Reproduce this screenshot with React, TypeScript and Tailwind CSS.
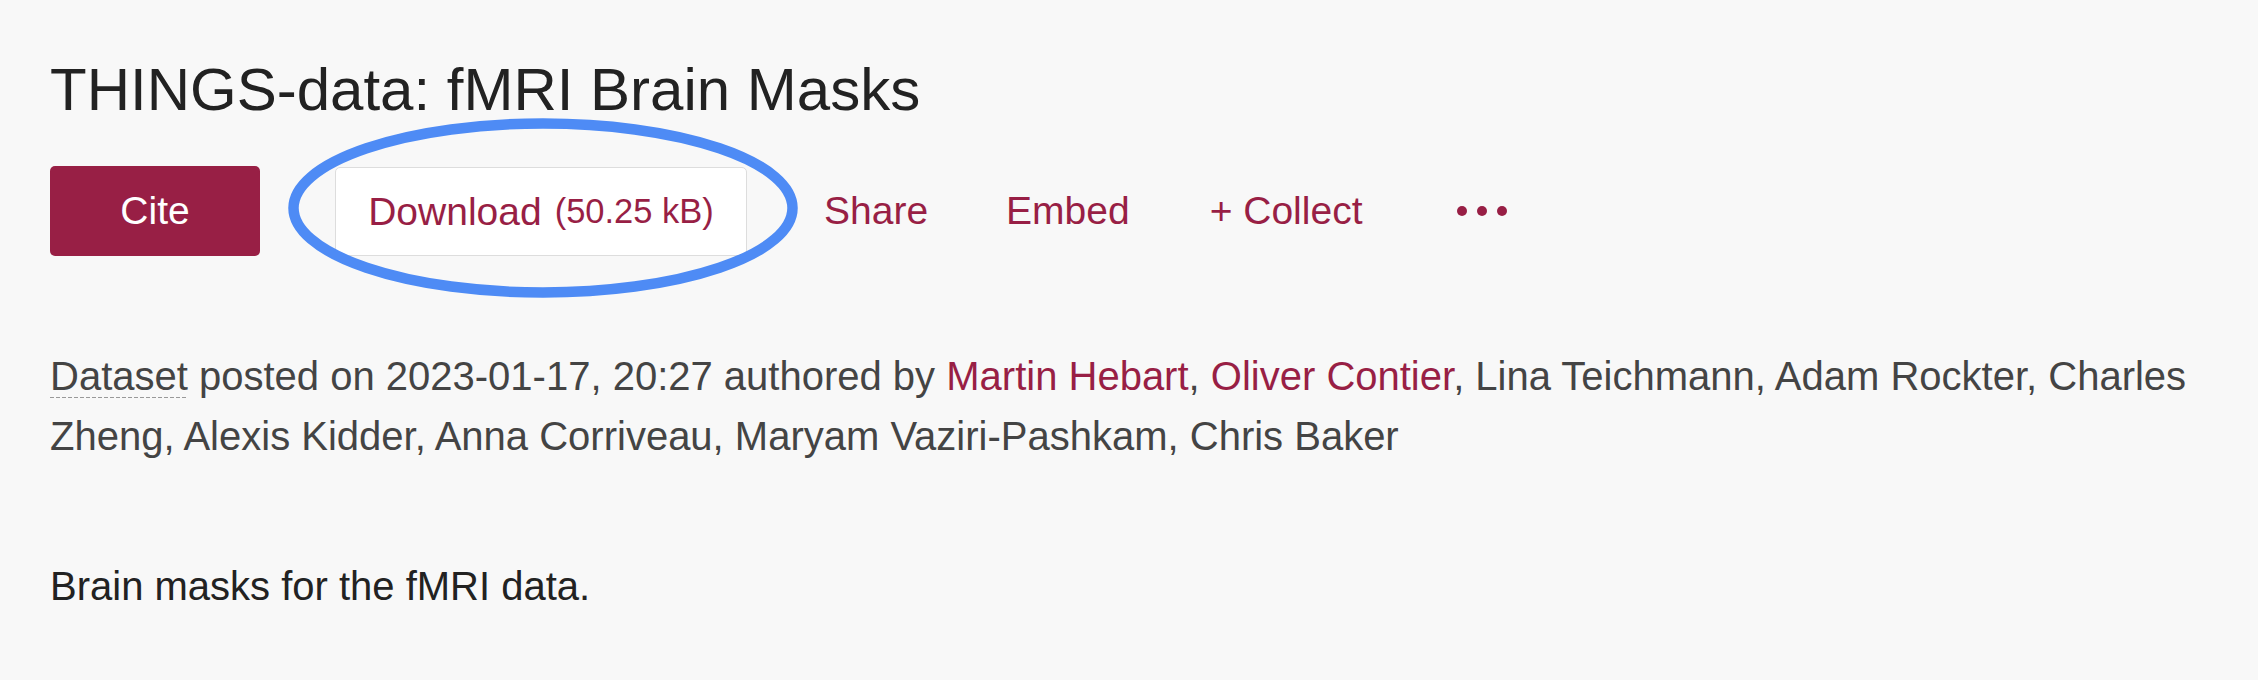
import React from "react";

export default function App() {
  return (
    <div className="min-h-[680px] w-full bg-[#f8f8f8] px-[50px] pt-[54px] font-['Liberation_Sans',Arial,sans-serif]">
      <h1 className="text-[60px] leading-[72px] font-normal text-[#222222]">
        THINGS-data: fMRI Brain Masks
      </h1>

      <div className="mt-[40px] flex h-[90px] items-center">
        <button className="h-[90px] w-[210px] rounded-[5px] bg-[#981f45] text-[39px] leading-[90px] text-white">
          Cite
        </button>

        <div className="relative ml-[75px] h-[89px] w-[412px]">
          <svg
            className="pointer-events-none absolute left-[-47px] top-[-49px] z-10"
            width="510"
            height="180"
            viewBox="0 0 510 180"
          >
            <ellipse
              cx="255"
              cy="90"
              rx="249.5"
              ry="84.5"
              fill="none"
              stroke="#4e8bf5"
              strokeWidth="10.5"
            />
          </svg>
          <button className="flex h-[89px] w-[412px] items-center justify-center rounded-[5px] border border-[#dddddd] bg-white text-[39px] leading-[87px] text-[#981f45]">
            <span>Download</span>
            <span className="ml-[13px] text-[34.5px]">(50.25 kB)</span>
          </button>
        </div>

        <span className="ml-[77px] text-[39px] leading-[90px] text-[#981f45]">Share</span>
        <span className="ml-[78px] text-[39px] leading-[90px] text-[#981f45]">Embed</span>
        <span className="ml-[80px] text-[39px] leading-[90px] text-[#981f45]">+ Collect</span>
        <span className="ml-[95px] flex items-center gap-[10px]">
          <span className="h-[10px] w-[10px] rounded-full bg-[#981f45]" />
          <span className="h-[10px] w-[10px] rounded-full bg-[#981f45]" />
          <span className="h-[10px] w-[10px] rounded-full bg-[#981f45]" />
        </span>
      </div>

      <p className="mt-[90px] text-[40px] leading-[60px] text-[#444444]">
        <span className="bg-[linear-gradient(to_right,#999999_4px,transparent_4px)] bg-[length:6px_1.5px] bg-[position:0_100%] bg-repeat-x">
          Dataset
        </span>{" "}
        posted on 2023-01-17, 20:27 authored by{" "}
        <span className="text-[#981f45]">Martin Hebart</span>,{" "}
        <span className="text-[#981f45]">Oliver Contier</span>, Lina Teichmann, Adam Rockter,
        Charles Zheng, Alexis Kidder, Anna Corriveau, Maryam Vaziri-Pashkam, Chris Baker
      </p>

      <p className="mt-[90px] text-[40px] leading-[60px] text-[#222222]">
        Brain masks for the fMRI data.
      </p>
    </div>
  );
}
